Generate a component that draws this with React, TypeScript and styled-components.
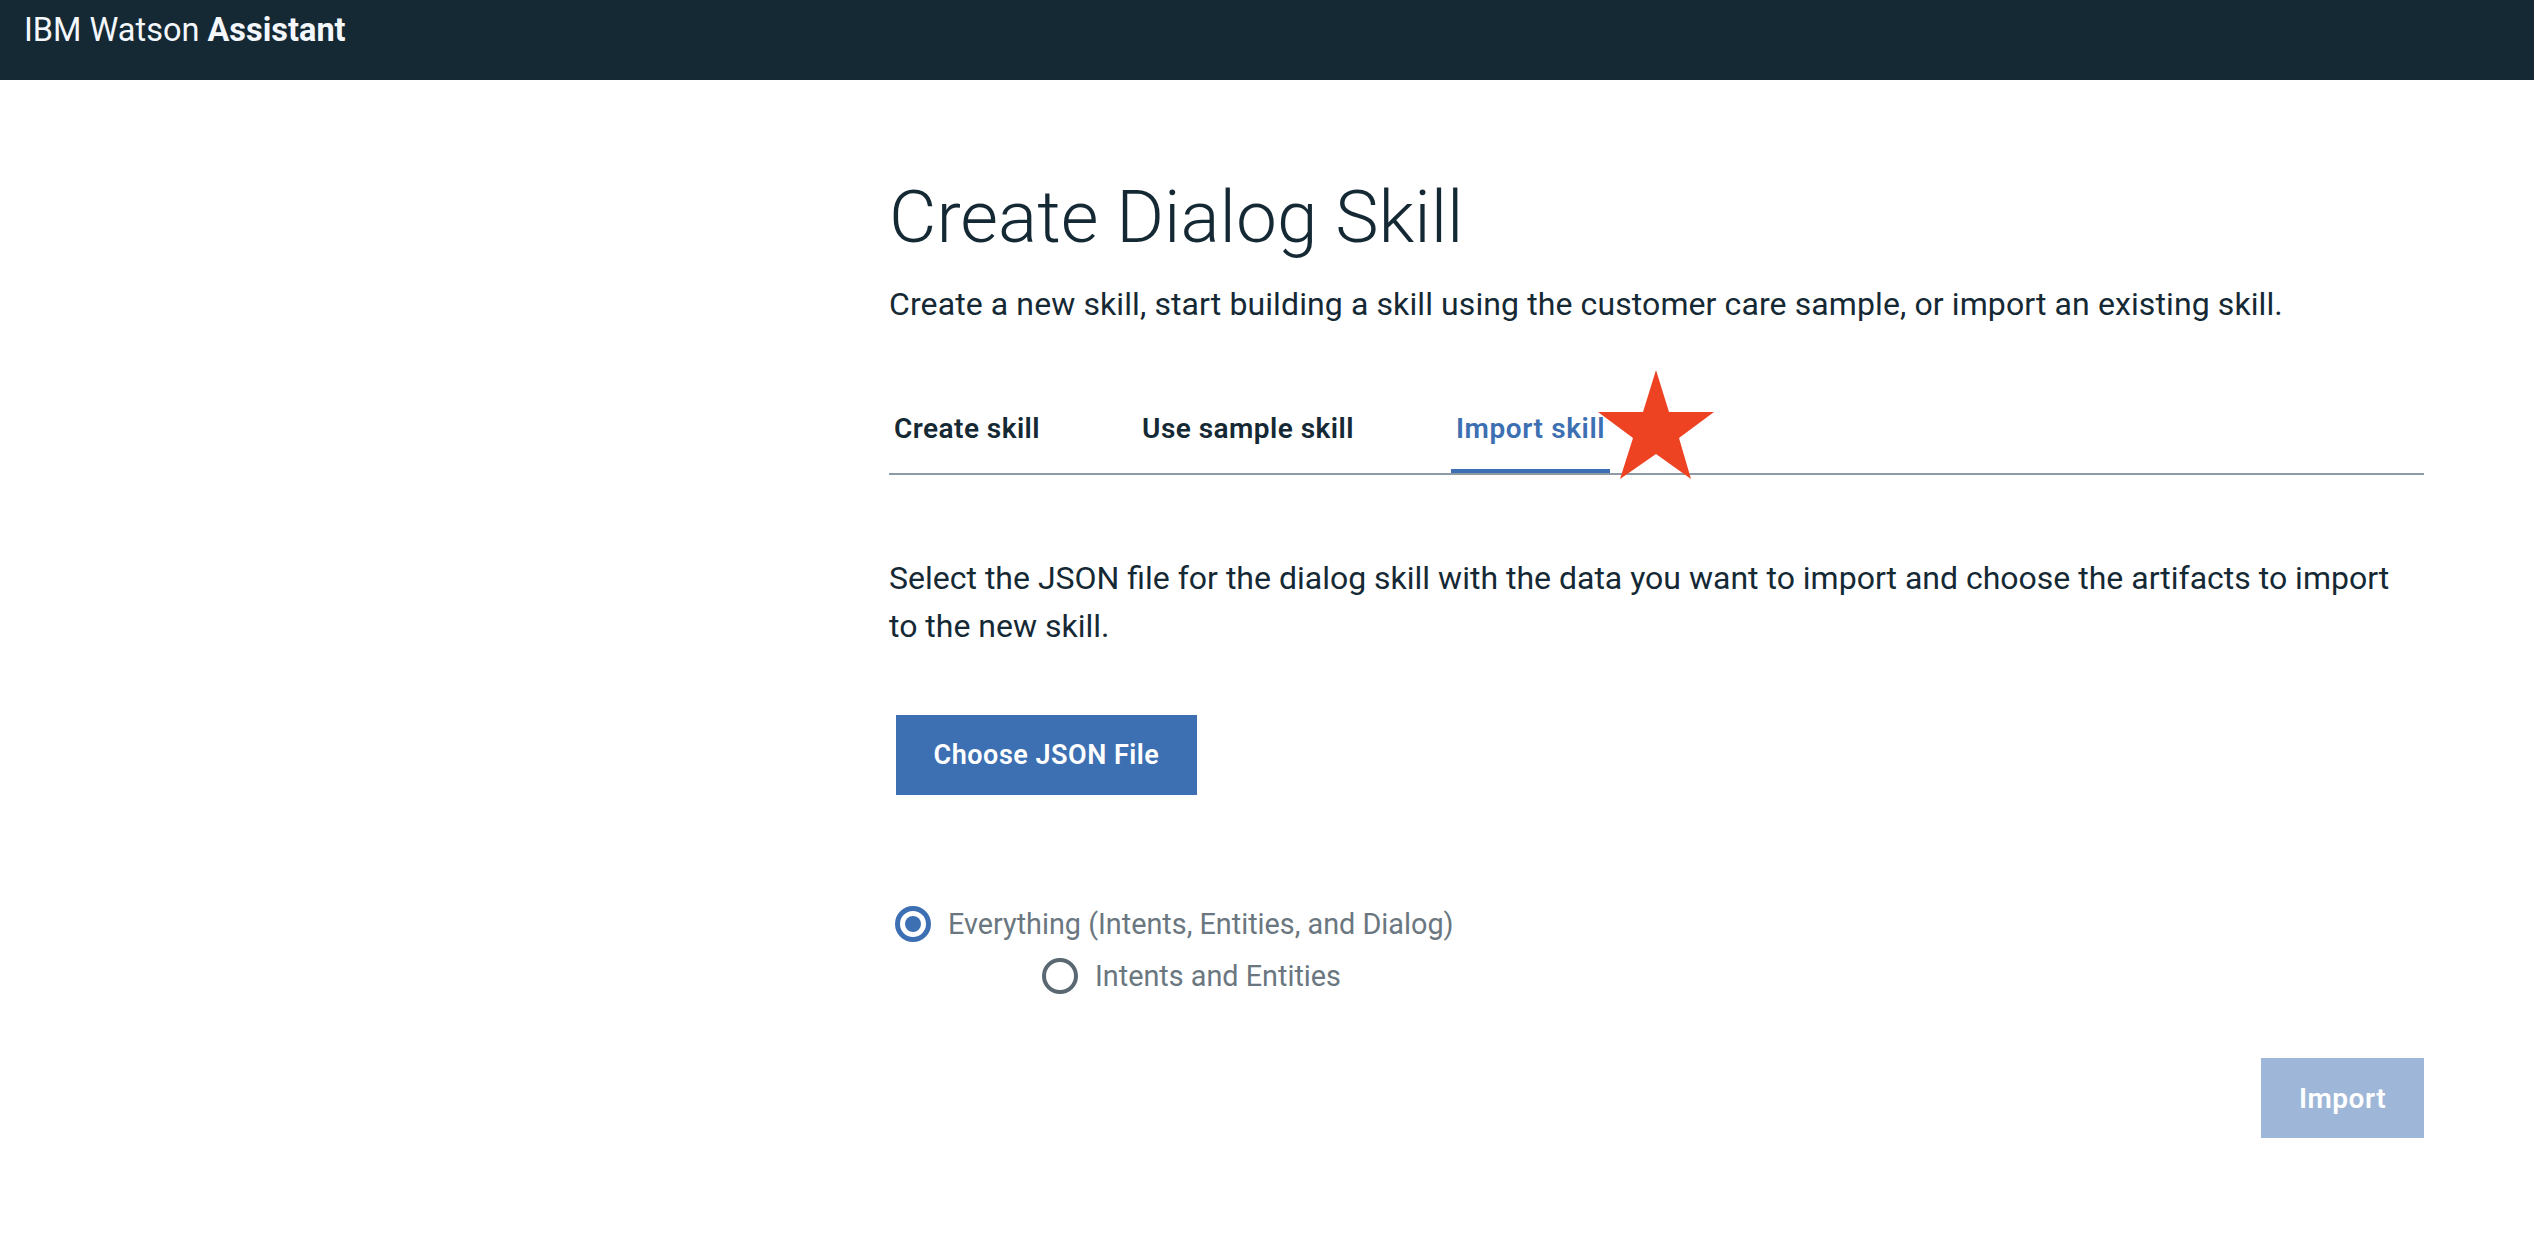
import React from "react";
import styled, { createGlobalStyle } from "styled-components";

const Global = createGlobalStyle`
  html, body { margin: 0; padding: 0; background: #ffffff; }
  body { font-family: Roboto, "Liberation Sans", Arial, sans-serif; color: #152935; }
  #root { min-height: 1246px; }
`;

const Header = styled.header`
  height: 80px;
  box-sizing: border-box;
  background: #152935;
  padding: 10px 0 0 24px;
  color: #f4f7fb;
  font-size: 32.5px;
  line-height: 40px;
  font-weight: 400;
  b { font-weight: 700; }
`;

const Main = styled.main`
  position: relative;
  box-sizing: border-box;
  width: 1535px;
  margin-left: 889px;
  display: flex;
  flex-direction: column;
`;

const Title = styled.h1`
  margin: 92px 0 0;
  font-size: 73px;
  line-height: 90px;
  font-weight: 300;
`;

const Subtitle = styled.p`
  margin: 22px 0 0;
  font-size: 32px;
  line-height: 40px;
  font-weight: 400;
  letter-spacing: 0.1px;
`;

const TabList = styled.div`
  margin-top: 85px;
  display: flex;
  gap: 92px;
  border-bottom: 2px solid #8c9ba5;
`;

const Tab = styled.div<{ $active?: boolean }>`
  padding: 0 5px 20px;
  font-size: 28px;
  line-height: 40px;
  font-weight: 600;
  letter-spacing: ${(p) => (p.$active ? "0.6px" : "0.45px")};
  color: ${(p) => (p.$active ? "#3d70b2" : "#152935")};
  border-bottom: 4px solid ${(p) => (p.$active ? "#3d70b2" : "transparent")};
`;

const Lead = styled.p`
  margin: 79px 0 0;
  font-size: 32px;
  line-height: 48px;
`;

const Button = styled.button<{ $disabled?: boolean }>`
  box-sizing: border-box;
  height: 80px;
  border: none;
  padding: 0;
  font-family: inherit;
  font-size: 27px;
  font-weight: 600;
  letter-spacing: 0.5px;
  color: #ffffff;
  background: ${(p) => (p.$disabled ? "#9eb7d8" : "#3d70b2")};
  cursor: pointer;
`;

const ChooseButton = styled(Button)`
  align-self: flex-start;
  margin: 65px 0 0 7px;
  width: 301px;
`;

const ImportButton = styled(Button)`
  align-self: flex-end;
  margin-top: 60px;
  width: 163px;
  font-size: 28px;
`;

const RadioGroup = styled.div`
  margin: 107px 0 0 6px;
  display: flex;
  flex-direction: column;
  gap: 8px;
`;

const RadioRow = styled.label<{ $indent?: number }>`
  height: 44px;
  display: flex;
  align-items: center;
  gap: 17px;
  margin-left: ${(p) => p.$indent ?? 0}px;
  font-size: 28.8px;
  color: #6b7780;
`;

const RadioCircle = styled.span<{ $checked?: boolean }>`
  box-sizing: border-box;
  width: 36px;
  height: 36px;
  border-radius: 50%;
  border: ${(p) => (p.$checked ? "5px solid #3d70b2" : "4px solid #5a6872")};
  display: flex;
  align-items: center;
  justify-content: center;
  &::after {
    content: "";
    display: ${(p) => (p.$checked ? "block" : "none")};
    width: 16px;
    height: 16px;
    border-radius: 50%;
    background: #3d70b2;
  }
`;

const Star = styled.svg`
  position: absolute;
  left: 709px;
  top: 290px;
  width: 116px;
  height: 110px;
`;

export default function App() {
  return (
    <>
      <Global />
      <Header>
        IBM Watson <b>Assistant</b>
      </Header>
      <Main>
        <Title>Create Dialog Skill</Title>
        <Subtitle>
          Create a new skill, start building a skill using the customer care sample, or import an existing skill.
        </Subtitle>
        <TabList>
          <Tab>Create skill</Tab>
          <Tab>Use sample skill</Tab>
          <Tab $active>Import skill</Tab>
        </TabList>
        <Star viewBox="0 0 116 110">
          <polygon
            points="58,0 71,42 116,42 81,68 93,109 58,84 22,109 35,68 0,42 45,42"
            fill="#ee4322"
          />
        </Star>
        <Lead>
          Select the JSON file for the dialog skill with the data you want to import and choose the artifacts to import
          to the new skill.
        </Lead>
        <ChooseButton>Choose JSON File</ChooseButton>
        <RadioGroup>
          <RadioRow>
            <RadioCircle $checked />
            Everything (Intents, Entities, and Dialog)
          </RadioRow>
          <RadioRow $indent={147}>
            <RadioCircle />
            Intents and Entities
          </RadioRow>
        </RadioGroup>
        <ImportButton $disabled>Import</ImportButton>
      </Main>
    </>
  );
}
